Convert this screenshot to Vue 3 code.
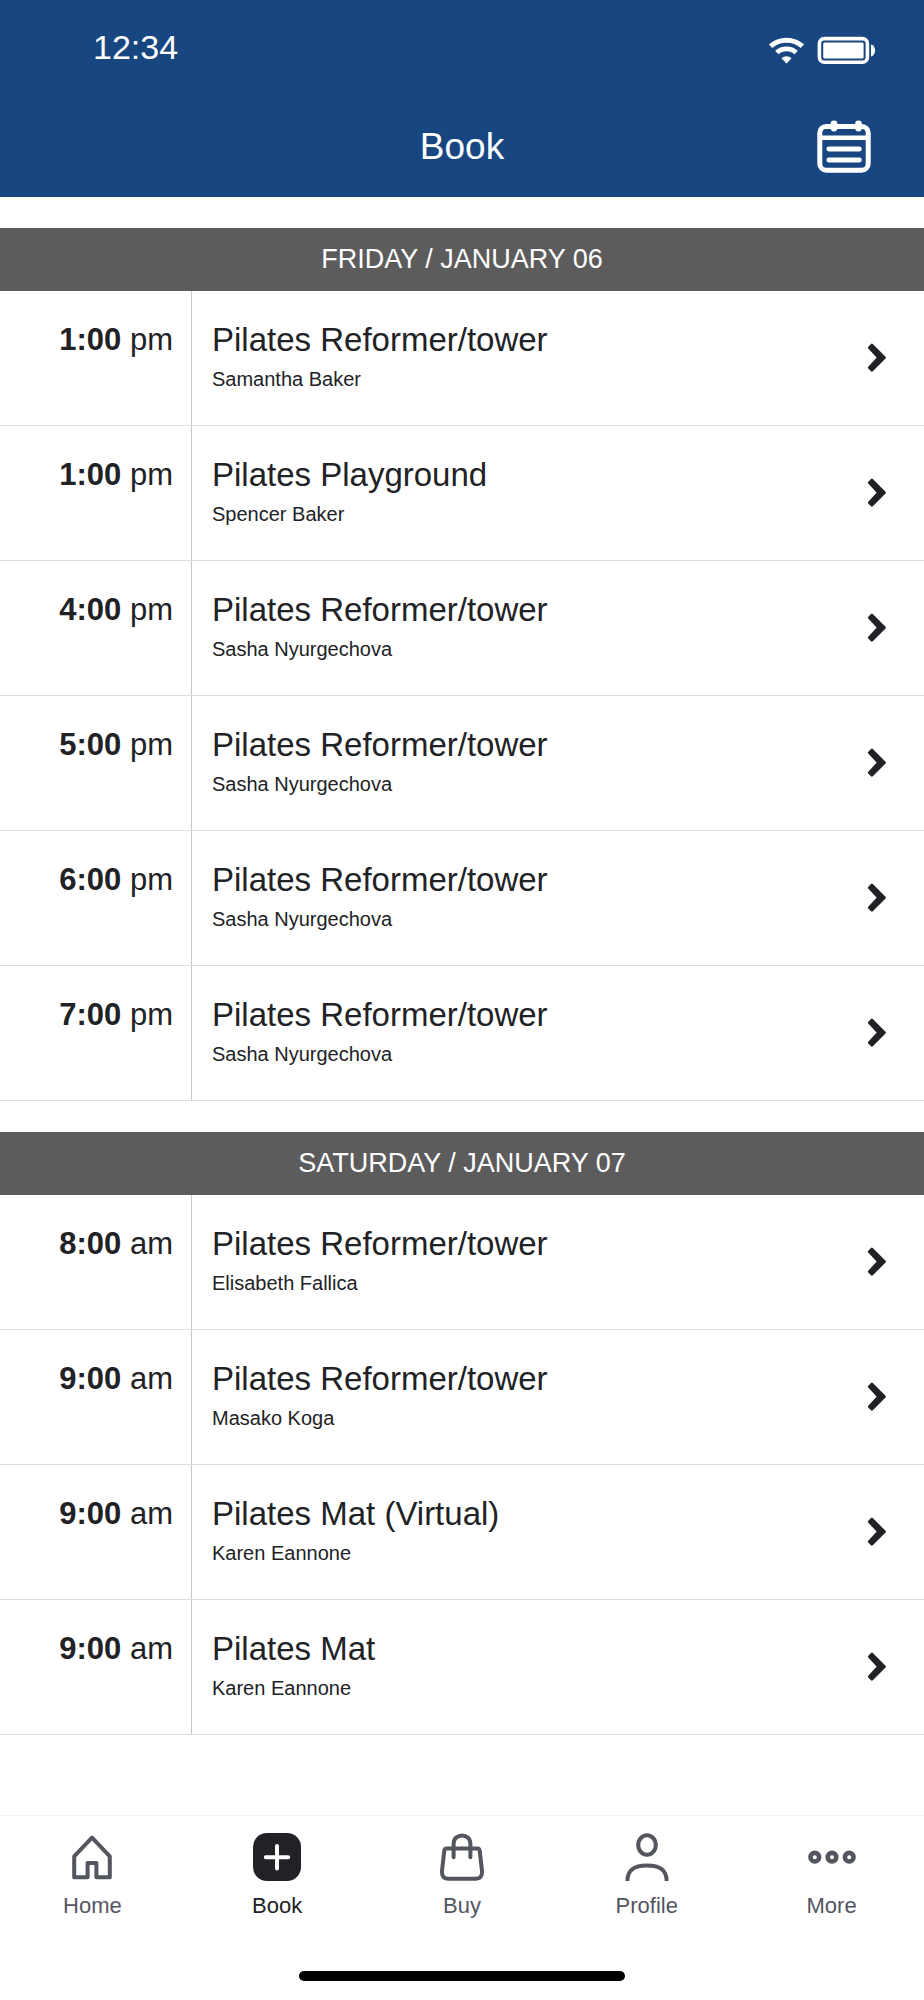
<template>
  <div class="app">
    <header class="header">
      <div class="status">
        <span class="clock">12:34</span>
        <div class="status-icons">
          <!-- Wifi -->
          <svg width="36" height="34" viewBox="0 0 36 34" fill="none" stroke="#fff" aria-hidden="true">
            <path d="M1.6 15.2C10.5 7.2 24.5 7.2 33.4 15.2" stroke-width="5" />
            <path d="M7.8 21.6C13 16.6 22 16.6 27.2 21.6" stroke-width="4.8" />
            <path d="M12.4 27.3C15.4 24.6 19.6 24.6 22.6 27.3L17.5 32.4Z" fill="#fff" stroke="none" />
          </svg>
          <!-- Batería -->
          <svg width="59" height="34" viewBox="0 0 59 34" aria-hidden="true">
            <rect x="2.4" y="7.6" width="48" height="23.6" rx="5" fill="none" stroke="#fff" stroke-width="3.6" />
            <rect x="6.2" y="11.4" width="40.4" height="16" rx="1.5" fill="#fff" />
            <path d="M54 13.6C59.4 15 59.4 24 54 25.6Z" fill="#fff" />
          </svg>
        </div>
      </div>

      <div class="title-bar">
        <h1>Book</h1>
        <button class="calendar" type="button" aria-label="Calendar">
          <svg width="56" height="56" viewBox="0 0 56 56" fill="none" stroke="#fff" aria-hidden="true">
            <rect x="3.8" y="7.4" width="48.4" height="43.8" rx="6.5" stroke-width="5" />
            <path d="M4 18.8H52" stroke-width="4.4" />
            <path d="M12.8 30H43.4M12.8 41H43.4" stroke-width="4.8" stroke-linecap="round" />
            <path d="M18 4.8V9M42.5 4.8V9" stroke-width="6.8" stroke-linecap="round" />
          </svg>
        </button>
      </div>
    </header>

    <main class="schedule">
      <section v-for="day in days" :key="day.label" class="day">
        <h2>{{ day.label }}</h2>
        <ul>
          <li v-for="item in day.classes" :key="item.id">
            <a href="#" class="row" @click.prevent="selected = item.id">
              <span class="time"><b>{{ item.time }}</b> {{ item.period }}</span>
              <span class="info">
                <span class="name">{{ item.name }}</span>
                <span class="teacher">{{ item.teacher }}</span>
              </span>
              <svg class="chevron" width="20" height="30" viewBox="0 0 20 30" aria-hidden="true">
                <path
                  d="M4.9 2L17.6 14.7L4.9 27.4L2.2 24.7L11.4 14.7L2.2 4.7Z"
                  fill="#212226"
                  stroke="#212226"
                  stroke-width="2.6"
                  stroke-linejoin="round"
                />
              </svg>
            </a>
          </li>
        </ul>
      </section>
    </main>

    <footer class="footer">
      <nav class="tabs">
        <button
          v-for="tab in tabs"
          :key="tab"
          type="button"
          class="tab"
          :class="{ active: tab === activeTab }"
          @click="activeTab = tab"
        >
          <svg width="48" height="48" viewBox="0 0 48 48" fill="none" stroke="currentColor" stroke-width="4" aria-hidden="true">
            <path
              v-if="tab === 'Home'"
              d="M6.2 44.2V23.4L24 4.6L41.8 23.4V44.2H28.4V30H19.6V44.2Z"
              stroke-linejoin="round"
            />
            <template v-else-if="tab === 'Book'">
              <rect width="48" height="48" rx="14" fill="currentColor" stroke="none" />
              <path d="M24 13V35.4M12.8 24.2H35.2" stroke="#fff" stroke-linecap="round" />
            </template>
            <template v-else-if="tab === 'Buy'">
              <path d="M8.6 15.4H39.4Q41.4 15.4 41.7 17.6L44 38Q44.6 45.8 37.6 45.8H10.4Q3.4 45.8 4 38L6.3 17.6Q6.6 15.4 8.6 15.4Z" />
              <path d="M15.6 24.2V10.8C15.6 -0.4 32.4 -0.4 32.4 10.8V24.2" stroke-linecap="round" />
            </template>
            <template v-else-if="tab === 'Profile'">
              <ellipse cx="24" cy="12" rx="8.8" ry="9.8" />
              <path d="M4.4 48C4.4 37 11 32.6 24 32.6C37 32.6 43.6 37 43.6 48" />
            </template>
            <template v-else>
              <circle cx="6.8" cy="24.2" r="4.3" stroke-width="4.6" />
              <circle cx="24" cy="24.2" r="4.3" stroke-width="4.6" />
              <circle cx="41.2" cy="24.2" r="4.3" stroke-width="4.6" />
            </template>
          </svg>
          <span>{{ tab }}</span>
        </button>
      </nav>
      <div class="home-indicator"></div>
    </footer>
  </div>
</template>

<script setup>
import { ref } from 'vue'

const tabs = ['Home', 'Book', 'Buy', 'Profile', 'More']
const activeTab = ref('Book')
const selected = ref(null)

const days = [
  {
    label: 'FRIDAY / JANUARY 06',
    classes: [
      { id: 1, time: '1:00', period: 'pm', name: 'Pilates Reformer/tower', teacher: 'Samantha Baker' },
      { id: 2, time: '1:00', period: 'pm', name: 'Pilates Playground', teacher: 'Spencer Baker' },
      { id: 3, time: '4:00', period: 'pm', name: 'Pilates Reformer/tower', teacher: 'Sasha Nyurgechova' },
      { id: 4, time: '5:00', period: 'pm', name: 'Pilates Reformer/tower', teacher: 'Sasha Nyurgechova' },
      { id: 5, time: '6:00', period: 'pm', name: 'Pilates Reformer/tower', teacher: 'Sasha Nyurgechova' },
      { id: 6, time: '7:00', period: 'pm', name: 'Pilates Reformer/tower', teacher: 'Sasha Nyurgechova' }
    ]
  },
  {
    label: 'SATURDAY / JANUARY 07',
    classes: [
      { id: 7, time: '8:00', period: 'am', name: 'Pilates Reformer/tower', teacher: 'Elisabeth Fallica' },
      { id: 8, time: '9:00', period: 'am', name: 'Pilates Reformer/tower', teacher: 'Masako Koga' },
      { id: 9, time: '9:00', period: 'am', name: 'Pilates Mat (Virtual)', teacher: 'Karen Eannone' },
      { id: 10, time: '9:00', period: 'am', name: 'Pilates Mat', teacher: 'Karen Eannone' }
    ]
  }
]
</script>

<style>
body { margin: 0; background: #fff; }
</style>

<style scoped>
.app {
  display: flex;
  flex-direction: column;
  min-height: 100vh;
  font-family: "Liberation Sans", Arial, sans-serif;
  color: #212226;
}

button {
  padding: 0;
  border: none;
  background: none;
  font-family: inherit;
  cursor: pointer;
}

svg { display: block; }

/* Cabecera */
.header { background: #184680; color: #fff; }

.status {
  display: flex;
  align-items: center;
  justify-content: space-between;
  height: 95px;
  padding: 0 48px 0 93px;
}

.clock { font-size: 34px; }

.status-icons { display: flex; gap: 12px; }

.title-bar {
  display: grid;
  grid-template-columns: 1fr auto 1fr;
  align-items: center;
  height: 100px;
  padding: 2px 52px 0;
}

h1 {
  grid-column: 2;
  margin: 0;
  font-size: 37px;
  font-weight: 400;
}

.calendar { justify-self: end; }

/* Horario */
.schedule { flex: 1; }

.day { padding-top: 31px; }

h2 {
  margin: 0;
  background: #5c5c5c;
  color: #fff;
  font-size: 27px;
  font-weight: 400;
  line-height: 63px;
  text-align: center;
}

ul { list-style: none; padding: 0; margin: 0; }

.row {
  display: flex;
  border-bottom: 1px solid #dcdee2;
  color: inherit;
  text-decoration: none;
}

.time {
  box-sizing: border-box;
  width: 192px;
  padding: 30px 18px 0 0;
  border-right: 1px solid #c5c8ce;
  font-size: 31px;
  line-height: 38px;
  text-align: right;
}

.info {
  display: flex;
  flex: 1;
  flex-direction: column;
  gap: 8px;
  padding: 30px 20px 34px;
}

.name { font-size: 33px; line-height: 38px; }
.teacher { font-size: 20px; line-height: 24px; }

.chevron { align-self: center; margin-right: 37px; }

/* Barra inferior */
.footer { border-top: 1px solid #f3f3f4; padding-bottom: 19px; }

.tabs {
  display: grid;
  grid-template-columns: repeat(5, 1fr);
  padding-top: 17px;
}

.tab {
  display: flex;
  flex-direction: column;
  align-items: center;
  gap: 12px;
  color: #53555f;
  font-size: 22px;
  line-height: 26px;
}

.tab.active { color: #212226; }

.home-indicator {
  width: 326px;
  height: 10px;
  margin: 52px auto 0;
  border-radius: 5px;
  background: #000;
}
</style>
